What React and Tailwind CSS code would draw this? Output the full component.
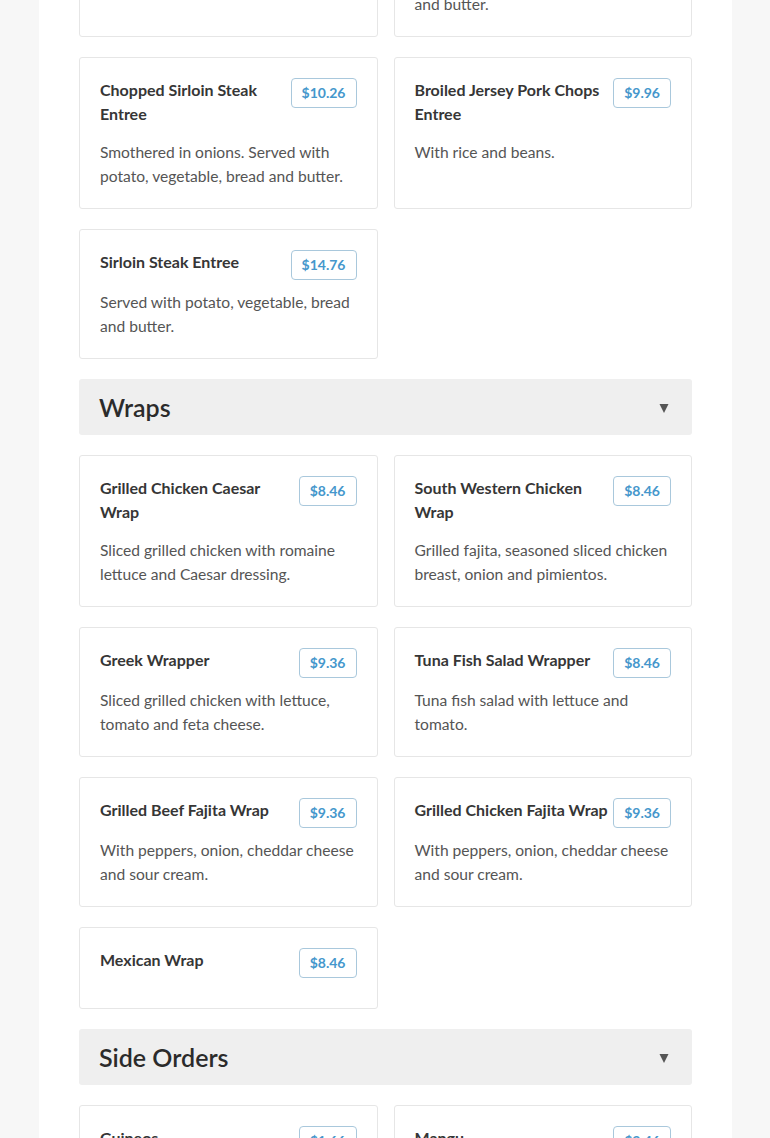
import React from "react";

const font = { fontFamily: "Lato, 'Open Sans', sans-serif" };

function Card({ title, price, desc }) {
  return (
    <div className="bg-white border border-[#e6e6e6] rounded-[3px] px-5 pt-5 pb-5">
      <div className="flex items-start justify-between gap-[3px]">
        <h3 className="flex-1 text-[16px] leading-6 font-bold text-[#363636] mb-[14px]">{title}</h3>
        <span className="shrink-0 mb-[10px] border border-[#a9c8dc] rounded-[4px] px-[10px] py-[4px] text-[14px] leading-5 font-bold text-[#4597cc]">
          {price}
        </span>
      </div>
      {desc && <p className="text-[15.6px] leading-6 text-[#555]">{desc}</p>}
    </div>
  );
}

function Section({ name }) {
  return (
    <div className="h-14 bg-[#efefef] rounded-[3px] flex items-center justify-between pl-5 pr-[23px]">
      <h2 className="text-[25px] font-semibold text-[#2b2b2b] leading-none">{name}</h2>
      <svg width="10" height="10" viewBox="0 0 10 10" className="mt-[1px]">
        <polygon points="0.5,1 9.5,1 5,10" fill="#555" />
      </svg>
    </div>
  );
}

export default function App() {
  return (
    <div className="min-h-screen bg-[#f7f7f7] overflow-hidden" style={font}>
      <div className="ml-[39px] w-[693px] bg-white px-10 pb-10 h-[1138px] overflow-hidden">
        <div className="flex flex-col gap-5 mt-[-115px]">
          <div className="grid grid-cols-2 gap-4">
            <Card title="Fried Pork Chops Entree" price="$9.96" desc="With rice and beans." />
            <Card
              title="Hamburger Steak with Onions Entree"
              price="$9.96"
              desc="Served with potato, vegetable, bread and butter."
            />
          </div>
          <div className="grid grid-cols-2 gap-4">
            <Card
              title="Chopped Sirloin Steak Entree"
              price="$10.26"
              desc="Smothered in onions. Served with potato, vegetable, bread and butter."
            />
            <Card title="Broiled Jersey Pork Chops Entree" price="$9.96" desc="With rice and beans." />
          </div>
          <div className="grid grid-cols-2 gap-4">
            <Card
              title="Sirloin Steak Entree"
              price="$14.76"
              desc="Served with potato, vegetable, bread and butter."
            />
          </div>
          <Section name="Wraps" />
          <div className="grid grid-cols-2 gap-4">
            <Card
              title="Grilled Chicken Caesar Wrap"
              price="$8.46"
              desc="Sliced grilled chicken with romaine lettuce and Caesar dressing."
            />
            <Card
              title="South Western Chicken Wrap"
              price="$8.46"
              desc="Grilled fajita, seasoned sliced chicken breast, onion and pimientos."
            />
          </div>
          <div className="grid grid-cols-2 gap-4">
            <Card
              title="Greek Wrapper"
              price="$9.36"
              desc="Sliced grilled chicken with lettuce, tomato and feta cheese."
            />
            <Card
              title="Tuna Fish Salad Wrapper"
              price="$8.46"
              desc="Tuna fish salad with lettuce and tomato."
            />
          </div>
          <div className="grid grid-cols-2 gap-4">
            <Card
              title="Grilled Beef Fajita Wrap"
              price="$9.36"
              desc="With peppers, onion, cheddar cheese and sour cream."
            />
            <Card
              title="Grilled Chicken Fajita Wrap"
              price="$9.36"
              desc="With peppers, onion, cheddar cheese and sour cream."
            />
          </div>
          <div className="grid grid-cols-2 gap-4">
            <Card title="Mexican Wrap" price="$8.46" />
          </div>
          <Section name="Side Orders" />
          <div className="grid grid-cols-2 gap-4">
            <Card title="Guineos" price="$1.66" desc="Fried green bananas." />
            <Card title="Mangu" price="$2.46" desc="Mashed green plantains." />
          </div>
        </div>
      </div>
    </div>
  );
}
